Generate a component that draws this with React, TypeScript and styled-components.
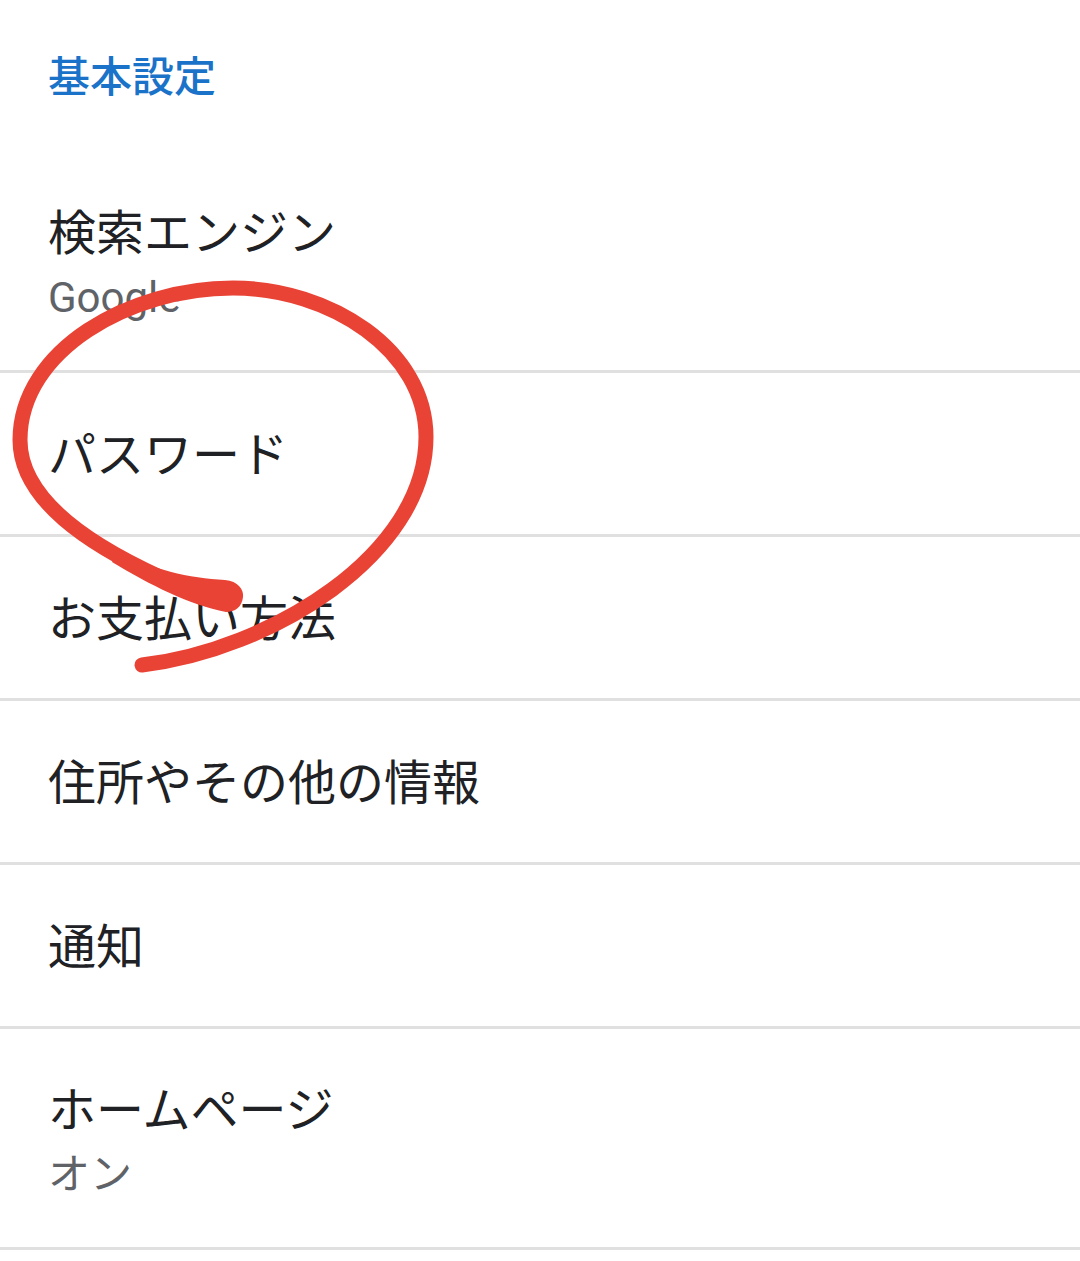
import styled, { createGlobalStyle } from "styled-components"

const GlobalStyle = createGlobalStyle`
  html, body {
    margin: 0;
    padding: 0;
    background: #fff;
  }
`

const Page = styled.div`
  position: relative;
  width: 1080px;
  height: 1261px;
  overflow: hidden;
  background: #fff;
  font-family: "Roboto", "Noto Sans CJK JP", sans-serif;
`

const Heading = styled.div`
  height: 152px;
  box-sizing: border-box;
  padding: 53px 0 0 48px;
  font-size: 42px;
  font-weight: 500;
  line-height: 50px;
  color: #1a73c8;
`

const Row = styled.div<{ $height: number }>`
  display: flex;
  flex-direction: column;
  justify-content: center;
  box-sizing: border-box;
  height: ${(p) => p.$height}px;
  padding: 5px 0 0 48px;
  border-bottom: 3px solid #e0e0e0;
`

const Title = styled.div`
  font-size: 48px;
  line-height: 58px;
  color: #202124;
`

const Sub = styled.div`
  margin-top: 9px;
  font-size: 42px;
  line-height: 51px;
  color: #5f6368;
`

const Scribble = styled.svg`
  position: absolute;
  left: 0;
  top: 0;
  pointer-events: none;
`

const rows = [
  { title: "検索エンジン", sub: "Google", height: 221 },
  { title: "パスワード", height: 164 },
  { title: "お支払い方法", height: 164 },
  { title: "住所やその他の情報", height: 164 },
  { title: "通知", height: 164 },
  { title: "ホームページ", sub: "オン", height: 221 },
]

const App = () => {
  return (
    <Page>
      <GlobalStyle />
      <Heading>基本設定</Heading>
      {rows.map((r) => (
        <Row key={r.title} $height={r.height}>
          <Title>{r.title}</Title>
          {r.sub && <Sub>{r.sub}</Sub>}
        </Row>
      ))}
      <Scribble width="1080" height="1261" viewBox="0 0 1080 1261">
        <path
          d="M142 665 C270 650 426 555 426 437 C426 350 330 288 233 288 C130 288 20 350 20 440 C20 500 90 545 160 577"
          fill="none"
          stroke="#e94335"
          strokeWidth="15"
          strokeLinecap="round"
        />
        <path
          d="M118 550 C150 570 190 578 225 580 C238 581 244 590 243 597 C242 607 235 612 226 612 C190 605 150 585 112 562 Z"
          fill="#e94335"
        />
      </Scribble>
    </Page>
  )
}

export default App
